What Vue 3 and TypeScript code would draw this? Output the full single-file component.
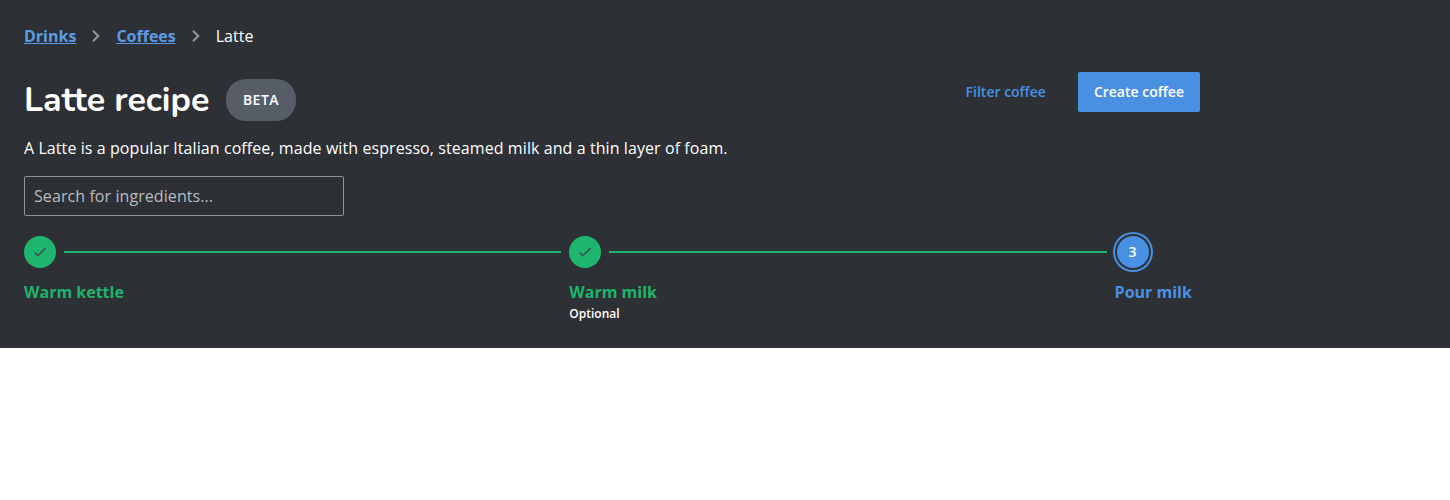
<script setup lang="ts">
interface Step {
  label: string
  state: 'done' | 'current'
  note?: string
}

const crumbs: string[] = ['Drinks', 'Coffees']
const steps: Step[] = [
  { label: 'Warm kettle', state: 'done' },
  { label: 'Warm milk', state: 'done', note: 'Optional' },
  { label: 'Pour milk', state: 'current' },
]
</script>

<template>
  <header class="page-header">
    <div class="inner">
      <nav class="crumbs">
        <template v-for="c in crumbs" :key="c">
          <a href="#">{{ c }}</a>
          <svg class="chevron" width="8" height="12" viewBox="0 0 8 12">
            <path d="M1 0.8l5.2 5.2-5.2 5.2" fill="none" stroke="#8f939b" stroke-width="2.2" />
          </svg>
        </template>
        <span>Latte</span>
      </nav>
      <div class="title-row">
        <h1>Latte recipe</h1>
        <span class="tag">BETA</span>
        <div class="actions">
          <button class="btn minimal">Filter coffee</button>
          <button class="btn primary">Create coffee</button>
        </div>
      </div>
      <p class="description">A Latte is a popular Italian coffee, made with espresso, steamed milk and a thin layer of foam.</p>
      <input class="search" type="text" placeholder="Search for ingredients..." />
      <ol class="steps">
        <li v-for="(s, i) in steps" :key="s.label" :class="['step', s.state]">
          <div class="track">
            <span class="dot">
              <svg v-if="s.state === 'done'" width="16" height="16" viewBox="0 0 16 16">
                <path d="M2.6 8.6l3.2 3.2 7.6-7.6" fill="none" stroke="#404b55" stroke-width="1.4" />
              </svg>
              <template v-else>{{ i + 1 }}</template>
            </span>
            <span v-if="i < steps.length - 1" class="line"></span>
          </div>
          <div class="label">{{ s.label }}</div>
          <div v-if="s.note" class="note">{{ s.note }}</div>
        </li>
      </ol>
    </div>
  </header>
</template>

<style>
body {
  background: #fff;
}
</style>

<style scoped>
.page-header {
  box-sizing: border-box;
  height: 348px;
  padding: 24px;
  background: #2d3034;
  color: #fff;
  font-family: "Open Sans", sans-serif;
  font-size: 16px;
  line-height: 24px;
}
.inner {
  width: 1176px;
}
.crumbs {
  display: flex;
  align-items: center;
  height: 24px;
}
.crumbs a {
  color: #5c9ce6;
  font-weight: 700;
}
.chevron {
  margin: 0 16px;
}
.title-row {
  display: flex;
  align-items: center;
  height: 56px;
  margin-top: 24px;
}
h1 {
  margin: 0;
  font-family: Nunito, "Open Sans", sans-serif;
  font-size: 34px;
  line-height: 40px;
  font-weight: 700;
}
.tag {
  box-sizing: border-box;
  height: 42px;
  margin-left: 17px;
  padding: 0 16.5px 0 16.5px;
  border-radius: 20px;
  background: #575d67;
  font-size: 14px;
  line-height: 42px;
  font-weight: 600;
  letter-spacing: 0.5px;
}
.actions {
  display: flex;
  align-self: flex-start;
  gap: 16px;
  margin-left: auto;
}
.btn {
  height: 40px;
  padding: 0 16px;
  border: 0;
  border-radius: 2px;
  background: none;
  color: #4a90e2;
  font: 600 14px/20px "Open Sans", sans-serif;
}
.primary {
  background: #4a90e2;
  color: #fff;
}
.description {
  margin: 8px 0 16px;
  letter-spacing: 0.08px;
}
.search {
  display: block;
  box-sizing: border-box;
  width: 320px;
  height: 40px;
  padding: 0 9px;
  border: 1px solid #8f939b;
  border-radius: 2px;
  background: transparent;
  color: #fff;
  font: 16px "Open Sans", sans-serif;
  letter-spacing: 0.08px;
}
.search::placeholder {
  color: #b9bcc1;
}
.steps {
  display: flex;
  margin: 20px 0 0;
  padding: 0;
  list-style: none;
}
.step {
  width: 545.3px;
}
.step:last-child {
  width: auto;
}
.track {
  display: flex;
  align-items: center;
  gap: 8px;
  height: 32px;
  padding-right: 8px;
}
.dot {
  display: flex;
  align-items: center;
  justify-content: center;
  width: 32px;
  height: 32px;
  border-radius: 50%;
  background: #1eb56c;
  font-size: 14px;
  font-weight: 600;
}
.line {
  flex: 1;
  height: 2px;
  background: #1eb56c;
}
.label {
  margin-top: 12px;
  color: #1eb56c;
  font-weight: 700;
}
.current .dot {
  margin-left: 2px;
  background: #4a90e2;
  box-shadow: 0 0 0 2px #2d3034, 0 0 0 4px #4a90e2;
}
.current .label {
  color: #4a90e2;
}
.note {
  margin-top: 1px;
  font-size: 12px;
  line-height: 18px;
  font-weight: 600;
}
</style>
